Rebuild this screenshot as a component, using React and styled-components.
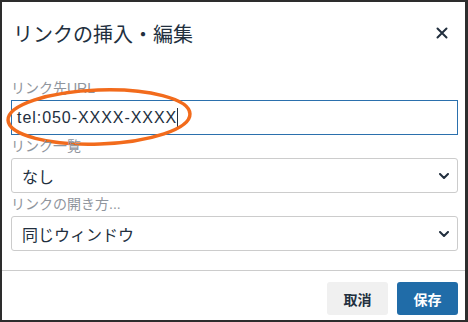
import React from 'react';
import styled, { createGlobalStyle } from 'styled-components';

const GlobalStyle = createGlobalStyle`
	html, body {
		margin: 0;
		padding: 0;
		background: #2d2d2d;
	}
	* {
		box-sizing: border-box;
	}
`;

const Frame = styled.div`
	width: 468px;
	height: 322px;
	border: 2px solid #2d2d2d;
	border-right-width: 3px;
	background-color: #fff;
	display: flex;
	flex-direction: column;
	font-family: "Liberation Sans", "Noto Sans CJK JP", sans-serif;
	color: #222f3e;
	overflow: hidden;
`;

const Header = styled.div`
	height: 62px;
	display: flex;
	align-items: center;
	justify-content: space-between;
	padding: 0 17px 0 11px;
`;

const Title = styled.h1`
	margin: 0;
	font-size: 20px;
	font-weight: 400;
	color: #222f3e;
`;

const CloseButton = styled.button`
	border: 0;
	background: none;
	padding: 0;
	width: 12px;
	height: 12px;
	display: flex;
	cursor: pointer;
`;

const Body = styled.div`
	flex: 1;
	padding: 13px 7px 0 9px;
	display: flex;
	flex-direction: column;
`;

const Field = styled.div`
	position: relative;
	display: flex;
	flex-direction: column;
`;

const Label = styled.label`
	height: 23px;
	line-height: 23px;
	font-size: 14px;
	color: #8f959d;
	white-space: nowrap;
`;

const TextBox = styled.div`
	height: 35px;
	border: 1px solid ${p => (p.$focused ? '#2b70ad' : '#cccccc')};
	border-radius: ${p => (p.$focused ? '0' : '3px')};
	padding: 0 ${p => (p.$focused ? '5px' : '8px')} 0 ${p => (p.$focused ? '5px' : '10px')};
	display: flex;
	align-items: center;
	justify-content: ${p => (p.$focused ? 'flex-start' : 'space-between')};
	font-size: 16px;
	letter-spacing: ${p => (p.$focused ? '0.95px' : '0')};
	color: #222f3e;
`;

const Caret = styled.span`
	width: 1px;
	height: 19px;
	background-color: #222f3e;
`;

const Highlight = styled.svg`
	position: absolute;
	left: -6px;
	top: 11px;
	pointer-events: none;
	overflow: visible;
`;

const Footer = styled.div`
	border-top: 1px solid #cccccc;
	height: 50px;
	display: flex;
	justify-content: flex-end;
	align-items: flex-start;
	gap: 9px;
	padding: 11px 7px 0 9px;
`;

const Button = styled.button`
	width: 61px;
	height: 33px;
	border: 0;
	border-radius: 3px;
	font-family: "Liberation Sans", "Noto Sans CJK JP", sans-serif;
	font-size: 14px;
	font-weight: 700;
	background-color: ${p => (p.$primary ? '#206ca8' : '#f0f0f0')};
	color: ${p => (p.$primary ? '#ffffff' : '#222f3e')};
	cursor: pointer;
`;

const Chevron = () => (
	<svg width="10" height="6" viewBox="0 0 10 6">
		<path d="M1 1 L5 5 L9 1" fill="none" stroke="#222f3e" strokeWidth="2" strokeLinecap="round" strokeLinejoin="round" />
	</svg>
);

const CloseIcon = () => (
	<svg width="12" height="12" viewBox="0 0 12 12">
		<path d="M1.5 1.5 L10.5 10.5 M10.5 1.5 L1.5 10.5" stroke="#222f3e" strokeWidth="2" strokeLinecap="round" />
	</svg>
);

const SelectField = ({ label, value }) => (
	<Field>
		<Label>{label}</Label>
		<TextBox>
			<span>{value}</span>
			<Chevron />
		</TextBox>
	</Field>
);

const App = () => {
	return (
		<>
			<GlobalStyle />
			<Frame>
				<Header>
					<Title>リンクの挿入・編集</Title>
					<CloseButton aria-label="close">
						<CloseIcon />
					</CloseButton>
				</Header>
				<Body>
					<Field>
						<Label>リンク先URL</Label>
						<TextBox $focused>
							<span>tel:050-XXXX-XXXX</span>
							<Caret />
						</TextBox>
						<Highlight width="190" height="60" viewBox="0 0 190 60">
							<ellipse cx="94" cy="29" rx="91" ry="27" fill="none" stroke="#f26b1c" strokeWidth="3.5" transform="rotate(-2 94 29)" />
						</Highlight>
					</Field>
					<SelectField label="リンク一覧" value="なし" />
					<SelectField label="リンクの開き方..." value="同じウィンドウ" />
				</Body>
				<Footer>
					<Button>取消</Button>
					<Button $primary>保存</Button>
				</Footer>
			</Frame>
		</>
	);
};

export default App;
